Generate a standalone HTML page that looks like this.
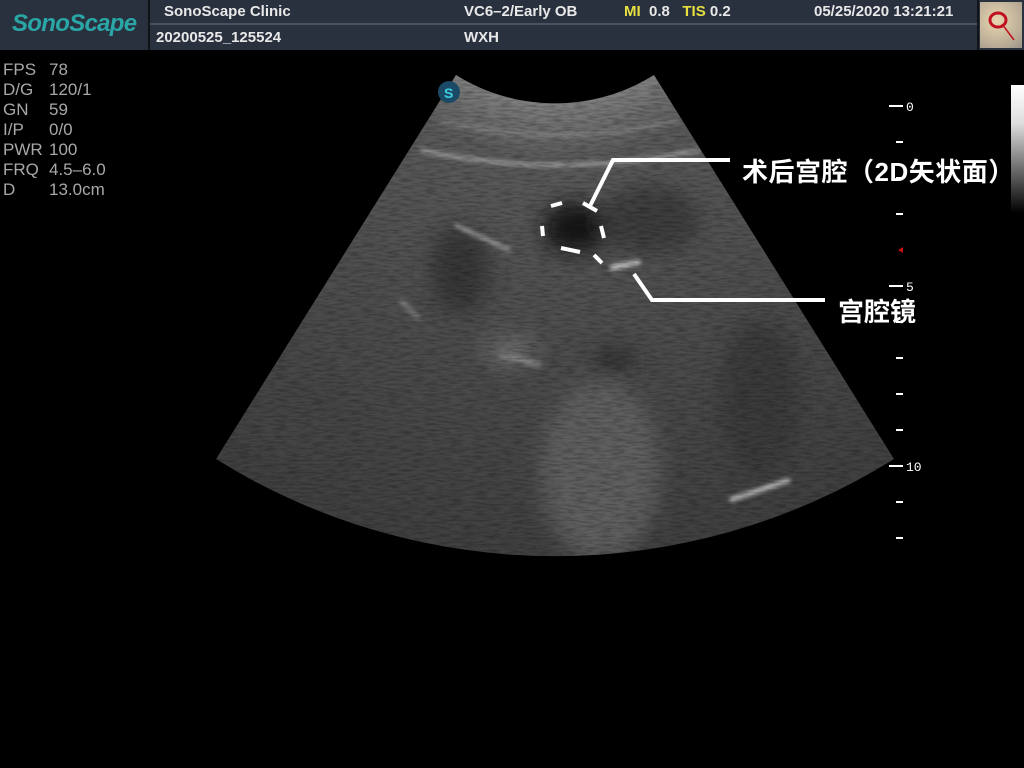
<!DOCTYPE html>
<html><head><meta charset="utf-8"><style>
html,body{margin:0;padding:0;background:#000;width:1024px;height:768px;overflow:hidden;position:relative;font-family:"Liberation Sans","Noto Sans CJK SC",sans-serif}
.hdr{position:absolute;left:0;top:0;width:1024px;height:50px;background:#29313f}
.t{position:absolute;color:#e8e8e8;font-weight:bold;font-size:15px;white-space:nowrap}
.y{color:#e6e040}
.p{position:absolute;left:3px;color:#a8a8a8;font-size:17px;line-height:20px;top:60px}
.p span{display:inline-block;width:46px}
.lbl{position:absolute;color:#fff;font-weight:bold;font-size:26px;white-space:nowrap;font-family:"Liberation Sans","Noto Sans CJK SC",sans-serif}
</style></head><body>
<div class="hdr"></div>
<div style="position:absolute;left:148px;top:0;width:2px;height:50px;background:#101418"></div>
<div style="position:absolute;left:150px;top:23px;width:828px;height:2px;background:#4a5260"></div>
<div style="position:absolute;left:977px;top:0;width:2px;height:50px;background:#101418"></div>
<div class="t" style="left:12px;top:10px;font-size:24px;font-style:italic;color:#2aa6a6;font-weight:bold;letter-spacing:-0.7px">SonoScape</div>
<div class="t" style="left:164px;top:3px">SonoScape Clinic</div>
<div class="t" style="left:156px;top:29px">20200525_125524</div>
<div class="t" style="left:464px;top:3px">VC6–2/Early OB</div>
<div class="t" style="left:464px;top:29px">WXH</div>
<div class="t" style="left:624px;top:3px"><span class="y">MI</span>&nbsp; 0.8 &nbsp;&nbsp;<span class="y">TIS</span> 0.2</div>
<div class="t" style="left:814px;top:3px">05/25/2020 13:21:21</div>
<div style="position:absolute;left:980px;top:2px;width:42px;height:46px;background:radial-gradient(circle at 40% 40%,#e9d6b0,#b8ab96 70%,#9a9288)"></div>
<svg style="position:absolute;left:980px;top:2px" width="42" height="46"><ellipse cx="18" cy="18" rx="8" ry="7" fill="none" stroke="#c01020" stroke-width="3"/><line x1="22" y1="22" x2="34" y2="38" stroke="#c01020" stroke-width="1.5"/></svg>
<div class="p"><span>FPS</span>78<br><span>D/G</span>120/1<br><span>GN</span>59<br><span>I/P</span>0/0<br><span>PWR</span>100<br><span>FRQ</span>4.5–6.0<br><span>D</span>13.0cm</div>
<svg style="position:absolute;left:0;top:0" width="1024" height="768">
<defs>
<clipPath id="c"><path d="M456,75 A187,187 0 0 0 654,75 L894,459 A640,640 0 0 1 216,459 Z"/></clipPath>
<radialGradient id="g" cx="555" cy="-84" r="640" gradientUnits="userSpaceOnUse">
<stop offset="0.29" stop-color="#808080"/><stop offset="0.38" stop-color="#5a5a5a"/><stop offset="0.7" stop-color="#4c4c4c"/><stop offset="1" stop-color="#404040"/></radialGradient>
<filter id="b"><feGaussianBlur stdDeviation="10"/></filter>
<filter id="b2"><feGaussianBlur stdDeviation="2.5"/></filter>
<filter id="n" x="0" y="0" width="100%" height="100%"><feTurbulence type="fractalNoise" baseFrequency="0.08 0.5" numOctaves="2" seed="3"/><feColorMatrix type="matrix" values="0 0 0 0 0  0 0 0 0 0  0 0 0 0 0  0 0 0 -1.6 1.0"/></filter>
</defs>
<g clip-path="url(#c)">
<rect width="1024" height="768" fill="url(#g)"/>
<g filter="url(#b)">
<ellipse cx="575" cy="228" rx="32" ry="25" fill="#151515"/>
<ellipse cx="460" cy="270" rx="30" ry="45" fill="#383838"/>
<ellipse cx="600" cy="470" rx="60" ry="90" fill="#5e5e5e"/>
<ellipse cx="760" cy="400" rx="40" ry="80" fill="#3a3a3a"/>
<ellipse cx="650" cy="220" rx="50" ry="35" fill="#3c3c3c"/>
<ellipse cx="300" cy="420" rx="50" ry="35" fill="#454545"/>
<ellipse cx="510" cy="350" rx="25" ry="15" fill="#6a6a6a"/>
<ellipse cx="615" cy="360" rx="22" ry="10" fill="#2a2a2a"/>
</g>
<g filter="url(#b2)" fill="none" stroke="#b8b8b8">
<path d="M420,150 Q555,180 700,150" stroke-width="3"/>
<path d="M440,120 Q555,150 680,120" stroke-width="2" stroke="#999"/>
<path d="M455,225 L510,250" stroke-width="3"/>
<path d="M730,500 L790,480" stroke-width="4" stroke="#ddd"/>
<path d="M610,268 L640,262" stroke-width="4" stroke="#eee"/>
<path d="M500,355 L540,365" stroke-width="4" stroke="#999"/>
<path d="M400,300 L420,320" stroke-width="4" stroke="#888"/>
</g>
<rect width="1024" height="768" filter="url(#n)" opacity="0.35"/>
</g>
<circle cx="449" cy="92" r="11" fill="#1b4a66"/><text x="444" y="98" fill="#3fd0e0" font-size="14" font-weight="bold" font-family="Liberation Sans">S</text>
<g stroke="#fff" stroke-width="4" fill="none">
<polyline points="730,160 613,160 590,206"/>
<line x1="583" y1="203" x2="597" y2="211"/>
<polyline points="634,274 652,300 825,300"/>
<line x1="551" y1="206" x2="562" y2="203"/>
<line x1="542" y1="226" x2="543" y2="236"/>
<line x1="561" y1="248" x2="580" y2="252"/>
<line x1="594" y1="255" x2="602" y2="263"/>
<line x1="601" y1="226" x2="604" y2="238"/>
</g>
<g stroke="#fff" stroke-width="2">
<line x1="889" y1="106" x2="903" y2="106"/><line x1="896" y1="142" x2="903" y2="142"/><line x1="896" y1="178" x2="903" y2="178"/><line x1="896" y1="214" x2="903" y2="214"/>
<line x1="889" y1="286" x2="903" y2="286"/><line x1="896" y1="322" x2="903" y2="322"/><line x1="896" y1="358" x2="903" y2="358"/><line x1="896" y1="394" x2="903" y2="394"/><line x1="896" y1="430" x2="903" y2="430"/>
<line x1="889" y1="466" x2="903" y2="466"/><line x1="896" y1="502" x2="903" y2="502"/><line x1="896" y1="538" x2="903" y2="538"/>
</g>
<g fill="#fff" font-size="13" font-family="Liberation Mono"><text x="906" y="111">0</text><text x="906" y="291">5</text><text x="906" y="471">10</text></g>
<path d="M898,250 L903,247 L903,253 Z" fill="#c01010"/>
<defs><linearGradient id="gb" x1="0" y1="0" x2="0" y2="1"><stop offset="0" stop-color="#fff"/><stop offset="0.3" stop-color="#ddd"/><stop offset="1" stop-color="#000"/></linearGradient></defs>
<rect x="1011" y="85" width="13" height="128" fill="url(#gb)"/>
</svg>
<div class="lbl" style="left:742px;top:152px;letter-spacing:0.5px">术后宫腔（2D矢状面）</div>
<div class="lbl" style="left:838px;top:292px">宫腔镜</div>
</body></html>
